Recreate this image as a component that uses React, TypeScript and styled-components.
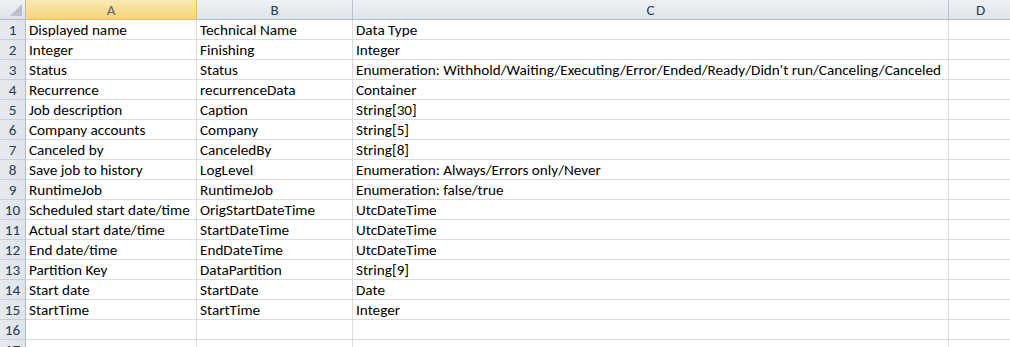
import { Fragment } from "react";
import styled, { createGlobalStyle } from "styled-components";

const GlobalStyle = createGlobalStyle`
  html, body {
    margin: 0;
    padding: 0;
    background: #ffffff;
    overflow: hidden;
  }
`;

// row header + columns A..E (border of each cell is included in the track)
const COLS = "26px 171px 156px 596px 64px 64px";

const Sheet = styled.div`
  display: grid;
  grid-template-columns: ${COLS};
  grid-auto-rows: 20px;
  width: 1010px;
  height: 347px;
  overflow: hidden;
  font-family: Carlito, Calibri, "Liberation Sans", sans-serif;
  font-size: 15.2px;
  color: #000;
`;

const Corner = styled.div`
  position: relative;
  box-sizing: border-box;
  background: linear-gradient(#f0f2f5, #dde2e8);
  border-right: 1px solid #b1bccb;
  border-bottom: 1px solid #b1bccb;
  &::after {
    content: "";
    position: absolute;
    right: 3px;
    bottom: 3px;
    width: 0;
    height: 0;
    border-left: 12px solid transparent;
    border-bottom: 12px solid #b9c2cc;
  }
`;

const ColHead = styled.div<{ $active?: boolean }>`
  box-sizing: border-box;
  display: flex;
  align-items: center;
  justify-content: center;
  padding-top: 1px;
  background: ${(p) =>
    p.$active
      ? "linear-gradient(#fbe9b4, #f9dc93 55%, #f7d283)"
      : "linear-gradient(#eef1f5, #dfe4ea)"};
  border-right: 1px solid ${(p) => (p.$active ? "#f2c35b" : "#b8c3d0")};
  border-bottom: 1px solid ${(p) => (p.$active ? "#f2c35b" : "#b1bccb")};
  color: ${(p) => (p.$active ? "#5f6672" : "#283a52")};
  font-size: 15px;
`;

const RowHead = styled.div`
  box-sizing: border-box;
  display: flex;
  align-items: center;
  justify-content: center;
  background: linear-gradient(90deg, #e7ebf0, #dfe4ea);
  border-right: 1px solid #b1bccb;
  border-bottom: 1px solid #c6ced8;
  color: #283a52;
`;

const Cell = styled.div`
  box-sizing: border-box;
  display: flex;
  align-items: center;
  padding: 1px 0 0 3px;
  border-right: 1px solid #dadcdd;
  border-bottom: 1px solid #dadcdd;
  white-space: nowrap;
  overflow: visible;
`;

const rows: [string, string, string][] = [
  ["Displayed name", "Technical Name", "Data Type"],
  ["Integer", "Finishing", "Integer"],
  [
    "Status",
    "Status",
    "Enumeration: Withhold/Waiting/Executing/Error/Ended/Ready/Didn't run/Canceling/Canceled",
  ],
  ["Recurrence", "recurrenceData", "Container"],
  ["Job description", "Caption", "String[30]"],
  ["Company accounts", "Company", "String[5]"],
  ["Canceled by", "CanceledBy", "String[8]"],
  ["Save job to history", "LogLevel", "Enumeration: Always/Errors only/Never"],
  ["RuntimeJob", "RuntimeJob", "Enumeration: false/true"],
  ["Scheduled start date/time", "OrigStartDateTime", "UtcDateTime"],
  ["Actual start date/time", "StartDateTime", "UtcDateTime"],
  ["End date/time", "EndDateTime", "UtcDateTime"],
  ["Partition Key", "DataPartition", "String[9]"],
  ["Start date", "StartDate", "Date"],
  ["StartTime", "StartTime", "Integer"],
  ["", "", ""],
  ["", "", ""],
];

const letters = ["A", "B", "C", "D", "E"];

export default function App() {
  return (
    <>
      <GlobalStyle />
      <Sheet>
        <Corner />
        {letters.map((l) => (
          <ColHead key={l} $active={l === "A"}>
            {l}
          </ColHead>
        ))}
        {rows.map((r, i) => (
          <Fragment key={i}>
            <RowHead>{i + 1}</RowHead>
            {r.map((v, j) => (
              <Cell key={j}>{v}</Cell>
            ))}
            <Cell />
            <Cell />
          </Fragment>
        ))}
      </Sheet>
    </>
  );
}
